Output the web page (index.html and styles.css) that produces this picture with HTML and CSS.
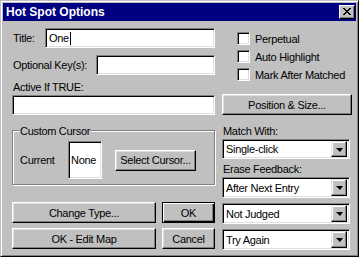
FILE: index.html
```html
<!DOCTYPE html>
<html lang="en">
<head>
  <meta charset="UTF-8">
  <title>Hot Spot Options</title>
  <link rel="stylesheet" href="styles.css">
</head>
<body>
  <div class="window">
    <div class="titlebar">
      <span class="title-text">Hot Spot Options</span>
      <span class="close">
        <svg width="8" height="7" viewBox="0 0 8 7"><path d="M0 0h2v1h1v1h2v-1h1v-1h2v1h-1v1h-1v1h-1v1h1v1h1v1h1v1h-2v-1h-1v-1h-2v1h-1v1h-2v-1h1v-1h1v-1h1v-1h-1v-1h-1v-1h-1z" fill="#000"/></svg>
      </span>
    </div>

    <div class="content">
      <div class="left">
        <div class="row first">
          <span>Title:</span>
          <div class="field title-field">One<span class="caret"></span></div>
        </div>
        <div class="row second">
          <span>Optional Key(s):</span>
          <div class="field key-field"></div>
        </div>
        <div class="caption">Active If TRUE:</div>
        <div class="field active-field"></div>

        <div class="group">
          <div class="legend">Custom Cursor</div>
          <div class="cursor-row">
            <span class="current">Current</span>
            <div class="field none-box">None</div>
            <div class="btn select-cursor">Select Cursor...</div>
          </div>
        </div>

        <div class="buttons">
          <div class="btn">Change Type...</div>
          <div class="btn default">OK</div>
          <div class="btn">OK - Edit Map</div>
          <div class="btn">Cancel</div>
        </div>
      </div>

      <div class="right">
        <div class="checks">
          <div class="check"><span class="box"></span>Perpetual</div>
          <div class="check"><span class="box"></span>Auto Highlight</div>
          <div class="check"><span class="box"></span>Mark After Matched</div>
        </div>
        <div class="btn position">Position &amp; Size...</div>
        <div class="caption match">Match With:</div>
        <div class="field select first-select">Single-click<span class="drop"></span></div>
        <div class="caption erase">Erase Feedback:</div>
        <div class="field select">After Next Entry<span class="drop"></span></div>
        <div class="field select">Not Judged<span class="drop"></span></div>
        <div class="field select">Try Again<span class="drop"></span></div>
      </div>
    </div>
  </div>
</body>
</html>
```

FILE: styles.css
```css
body {
  margin: 0;
  background-color: #fff;
  font-family: "Liberation Sans", Arial, sans-serif;
  font-size: 11px;
  letter-spacing: -0.3px;
  line-height: 14px;
  white-space: nowrap;
  color: #000;
}
.window {
  width: 359px;
  height: 257px;
  box-sizing: border-box;
  background-color: #c0c0c0;
  border: 1px solid;
  border-color: #c0c0c0 #000 #000 #c0c0c0;
  box-shadow: inset 1px 1px #fff, inset -1px -1px #808080;
  padding: 2px;
  overflow: hidden;
}
.titlebar {
  height: 18px;
  background-color: #000080;
  color: #fff;
  display: flex;
  align-items: center;
  justify-content: space-between;
  padding: 0 1px 0 3px;
}
.title-text {
  font-weight: bold;
  font-size: 12px;
  letter-spacing: 0;
}
.close {
  width: 16px;
  height: 14px;
  box-sizing: border-box;
  background-color: #c0c0c0;
  border: 1px solid;
  border-color: #fff #000 #000 #fff;
  box-shadow: inset -1px -1px #808080;
  display: flex;
  align-items: center;
  justify-content: center;
  padding: 0 1px 1px 0;
}
.content {
  display: flex;
  gap: 7px;
  padding-left: 9px;
}
.left {
  width: 203px;
}
.right {
  width: 130px;
  display: flex;
  flex-direction: column;
}

/* sunken field */
.field {
  box-sizing: border-box;
  background-color: #fff;
  border: 1px solid;
  border-color: #808080 #fff #fff #808080;
  box-shadow: inset 1px 1px #000, inset -1px -1px #dfdfdf;
  height: 20px;
  padding: 2px 3px;
}
/* raised button */
.btn {
  box-sizing: border-box;
  background-color: #c0c0c0;
  border: 1px solid;
  border-color: #fff #000 #000 #fff;
  box-shadow: inset -1px -1px #808080, inset 1px 1px #dfdfdf;
  height: 21px;
  display: flex;
  align-items: center;
  justify-content: center;
}
.btn.default {
  border: 1px solid #000;
  box-shadow: inset 1px 1px #fff, inset -1px -1px #000, inset -2px -2px #808080;
}

.row {
  display: flex;
  align-items: center;
  justify-content: space-between;
  padding-left: 1px;
}
.row.first {
  margin-top: 7px;
}
.row.second {
  margin-top: 7px;
}
.title-field {
  width: 170px;
  display: flex;
  align-items: center;
}
.caret {
  display: inline-block;
  width: 1px;
  height: 13px;
  background-color: #000;
  margin-left: 1px;
}
.key-field {
  width: 119px;
}
.caption {
  padding-left: 1px;
  margin-top: 5px;
}
.active-field {
  margin-top: 1px;
  width: 203px;
}

.group {
  margin-top: 15px;
  border: 1px solid #808080;
  box-shadow: inset 1px 1px #fff, 1px 1px #fff;
  padding-bottom: 5px;
}
.legend {
  width: fit-content;
  margin: -7px 0 0 6px;
  padding: 0 1px;
  background-color: #c0c0c0;
}
.cursor-row {
  display: flex;
  align-items: center;
  margin-top: 3px;
  padding-left: 7px;
}
.current {
  width: 48px;
}
.none-box {
  width: 34px;
  height: 38px;
  display: flex;
  align-items: center;
  padding: 0 2px;
}
.select-cursor {
  width: 81px;
  margin-left: 13px;
}

.buttons {
  display: grid;
  grid-template-columns: 144px 53px;
  grid-auto-rows: 21px;
  column-gap: 6px;
  row-gap: 5px;
  margin-top: 17px;
}

.checks {
  margin: 11px 0 0 15px;
  display: flex;
  flex-direction: column;
  gap: 5px;
}
.check {
  display: flex;
  align-items: center;
  height: 13px;
}
.check .box {
  width: 13px;
  height: 13px;
  box-sizing: border-box;
  background-color: #fff;
  border: 1px solid;
  border-color: #808080 #fff #fff #808080;
  box-shadow: inset 1px 1px #000, inset -1px -1px #dfdfdf;
  margin-right: 5px;
}
.position {
  margin-top: 13px;
}
.match {
  margin-top: 9px;
}
.erase {
  margin-top: 3px;
}
.select {
  width: 128px;
  height: 21px;
  display: flex;
  align-items: center;
  justify-content: space-between;
  padding: 2px 2px 2px 3px;
  margin-top: 5px;
}
.first-select {
  height: 20px;
  margin-top: 1px;
}
.first-select .drop {
  height: 16px;
}
.erase + .select {
  margin-top: 1px;
}
.drop {
  width: 16px;
  height: 17px;
  box-sizing: border-box;
  background-color: #c0c0c0;
  border: 1px solid;
  border-color: #dfdfdf #000 #000 #dfdfdf;
  box-shadow: inset -1px -1px #808080, inset 1px 1px #fff;
  display: flex;
  align-items: center;
  justify-content: center;
}
.drop::after {
  content: "";
  border-left: 4px solid transparent;
  border-right: 3px solid transparent;
  border-top: 4px solid #000;
  margin-top: 1px;
}
```
